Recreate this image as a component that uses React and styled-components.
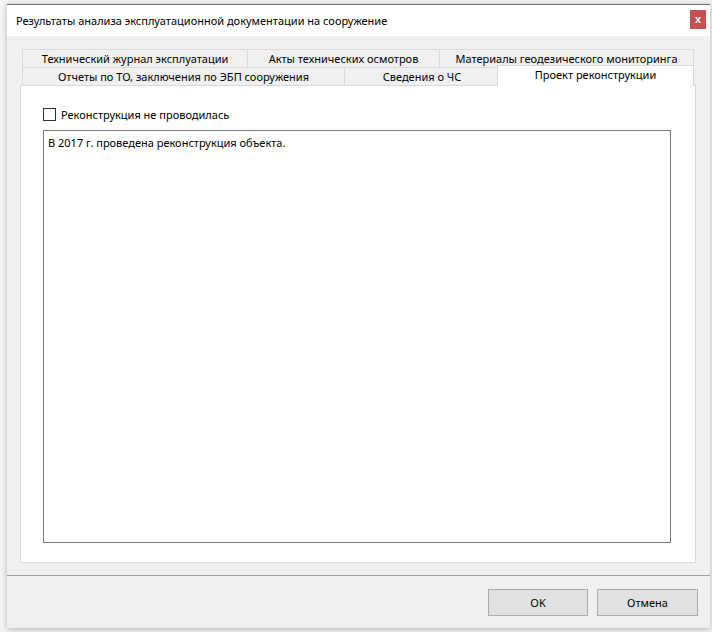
import React, { useState } from 'react';
import styled, { createGlobalStyle } from 'styled-components';

const GlobalStyle = createGlobalStyle`
  html, body {
    margin: 0;
    padding: 0;
    background: #f4f4f4;
  }
  body {
    font-family: "Noto Sans", "Liberation Sans", sans-serif;
    font-size: 11px;
    color: #000;
  }
`;

const Page = styled.div`
  width: 712px;
  height: 632px;
  padding: 4px 2px 4px 7px;
  box-sizing: border-box;
  display: flex;
`;

const Window = styled.div`
  flex: 1;
  display: flex;
  flex-direction: column;
  background: #f0f0f0;
  border-top: 1px solid #6f6f6f;
  box-shadow: 0 1px 6px rgba(0, 0, 0, 0.28);
`;

const TitleBar = styled.div`
  height: 31px;
  background: #fff;
  display: flex;
  align-items: center;
  justify-content: space-between;
  padding: 0 4px 0 9px;
`;

const Title = styled.span`
  font-size: 11px;
  margin-top: -1px;
`;

const CloseButton = styled.button`
  width: 16px;
  height: 19px;
  margin-top: -2px;
  padding: 0;
  border: none;
  background: #c75050;
  color: #fff;
  font-family: "Liberation Sans", sans-serif;
  font-size: 11px;
  font-weight: bold;
  line-height: 19px;
  cursor: pointer;
`;

const Body = styled.div`
  flex: 1;
  display: flex;
  flex-direction: column;
`;

const Content = styled.div`
  padding: 13px 12px 12px 13px;
`;

const TabWidget = styled.div`
  width: 676px;
  display: flex;
  flex-direction: column;
`;

const TabRow = styled.div`
  display: flex;
  padding: 0 2px;
  height: 18px;
  position: relative;
  z-index: ${p => (p.$front ? 2 : 1)};
`;

const Tab = styled.div`
  width: ${p => p.$w}px;
  box-sizing: border-box;
  display: flex;
  justify-content: center;
  align-items: center;
  border: 1px solid #d9d9d9;
  border-bottom: none;
  margin-left: -1px;
  background: ${p => (p.$active ? '#fff' : '#f0f0f0')};
  white-space: nowrap;
  ${p =>
    p.$active &&
    `
    height: 21px;
    margin-top: -2px;
    margin-left: -3px;
    width: ${p.$w + 2}px;
    align-items: flex-start;
    padding-top: 1px;
  `}
  &:first-child {
    margin-left: 0;
  }
`;

const Pane = styled.div`
  height: 478px;
  background: #fff;
  border: 1px solid #d9d9d9;
  box-sizing: border-box;
  padding: 21px 24px 19px 22px;
  display: flex;
  flex-direction: column;
  gap: 9px;
`;

const CheckRow = styled.label`
  display: flex;
  align-items: center;
  gap: 5px;
  height: 14px;
  cursor: pointer;
`;

const CheckBox = styled.span`
  width: 13px;
  height: 13px;
  box-sizing: border-box;
  border: 1px solid #333;
  background: #fff;
  display: flex;
  align-items: center;
  justify-content: center;
  font-size: 10px;
`;

const TextArea = styled.textarea`
  flex: 1;
  resize: none;
  border: 1px solid #7a7a7a;
  padding: 4px 4px;
  font-family: inherit;
  font-size: 11px;
  color: #000;
  outline: none;
`;

const Separator = styled.div`
  border-top: 1px solid #a0a0a0;
`;

const Footer = styled.div`
  flex: 1;
  display: flex;
  justify-content: flex-end;
  gap: 9px;
  padding: 13px 12px 0 0;
`;

const Button = styled.button`
  width: ${p => p.$w}px;
  height: 27px;
  background: #e1e1e1;
  border: 1px solid #adadad;
  font-family: inherit;
  font-size: 11px;
  color: #000;
  cursor: pointer;
`;

const rowOne = [
  { label: 'Технический журнал эксплуатации', w: 226 },
  { label: 'Акты технических осмотров', w: 193 },
  { label: 'Материалы геодезического мониторинга', w: 255 },
];

const rowTwo = [
  { label: 'Отчеты по ТО, заключения по ЭБП сооружения', w: 323 },
  { label: 'Сведения о ЧС', w: 156 },
  { label: 'Проект реконструкции', w: 195, active: true },
];

export default function App() {
  const [checked, setChecked] = useState(false);
  const [text, setText] = useState('В 2017 г. проведена реконструкция объекта.');

  return (
    <>
      <GlobalStyle />
      <Page>
        <Window>
          <TitleBar>
            <Title>Результаты анализа эксплуатационной документации на сооружение</Title>
            <CloseButton>x</CloseButton>
          </TitleBar>
          <Body>
            <Content>
              <TabWidget>
                <TabRow>
                  {rowOne.map(t => (
                    <Tab key={t.label} $w={t.w}>{t.label}</Tab>
                  ))}
                </TabRow>
                <TabRow $front>
                  {rowTwo.map(t => (
                    <Tab key={t.label} $w={t.w} $active={t.active}>{t.label}</Tab>
                  ))}
                </TabRow>
                <Pane>
                  <CheckRow onClick={() => setChecked(!checked)}>
                    <CheckBox>{checked ? '✓' : ''}</CheckBox>
                    Реконструкция не проводилась
                  </CheckRow>
                  <TextArea value={text} onChange={e => setText(e.target.value)} />
                </Pane>
              </TabWidget>
            </Content>
            <Separator />
            <Footer>
              <Button $w={100}>OK</Button>
              <Button $w={101}>Отмена</Button>
            </Footer>
          </Body>
        </Window>
      </Page>
    </>
  );
}
